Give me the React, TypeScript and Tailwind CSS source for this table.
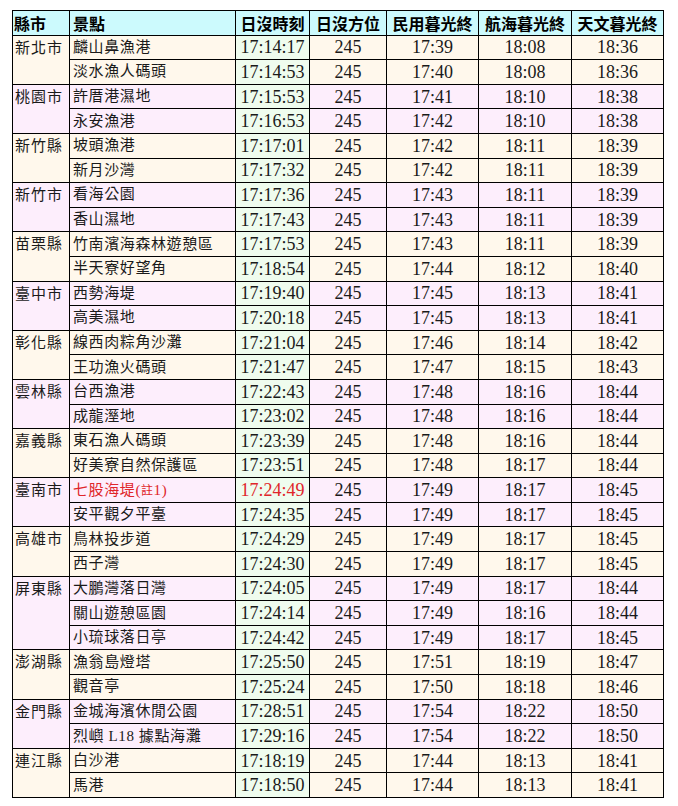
import React from "react";

type Row = { place: React.ReactNode; t: string; az: string; c: string; n: string; a: string; red?: boolean };
type Group = { county: string; rows: Row[] };

const groups: Group[] = [
  { county: "新北市", rows: [
    { place: "麟山鼻漁港", t: "17:14:17", az: "245", c: "17:39", n: "18:08", a: "18:36" },
    { place: "淡水漁人碼頭", t: "17:14:53", az: "245", c: "17:40", n: "18:08", a: "18:36" },
  ]},
  { county: "桃園市", rows: [
    { place: "許厝港濕地", t: "17:15:53", az: "245", c: "17:41", n: "18:10", a: "18:38" },
    { place: "永安漁港", t: "17:16:53", az: "245", c: "17:42", n: "18:10", a: "18:38" },
  ]},
  { county: "新竹縣", rows: [
    { place: "坡頭漁港", t: "17:17:01", az: "245", c: "17:42", n: "18:11", a: "18:39" },
    { place: "新月沙灣", t: "17:17:32", az: "245", c: "17:42", n: "18:11", a: "18:39" },
  ]},
  { county: "新竹市", rows: [
    { place: "看海公園", t: "17:17:36", az: "245", c: "17:43", n: "18:11", a: "18:39" },
    { place: "香山濕地", t: "17:17:43", az: "245", c: "17:43", n: "18:11", a: "18:39" },
  ]},
  { county: "苗栗縣", rows: [
    { place: "竹南濱海森林遊憩區", t: "17:17:53", az: "245", c: "17:43", n: "18:11", a: "18:39" },
    { place: "半天寮好望角", t: "17:18:54", az: "245", c: "17:44", n: "18:12", a: "18:40" },
  ]},
  { county: "臺中市", rows: [
    { place: "西勢海堤", t: "17:19:40", az: "245", c: "17:45", n: "18:13", a: "18:41" },
    { place: "高美濕地", t: "17:20:18", az: "245", c: "17:45", n: "18:13", a: "18:41" },
  ]},
  { county: "彰化縣", rows: [
    { place: "線西肉粽角沙灘", t: "17:21:04", az: "245", c: "17:46", n: "18:14", a: "18:42" },
    { place: "王功漁火碼頭", t: "17:21:47", az: "245", c: "17:47", n: "18:15", a: "18:43" },
  ]},
  { county: "雲林縣", rows: [
    { place: "台西漁港", t: "17:22:43", az: "245", c: "17:48", n: "18:16", a: "18:44" },
    { place: "成龍溼地", t: "17:23:02", az: "245", c: "17:48", n: "18:16", a: "18:44" },
  ]},
  { county: "嘉義縣", rows: [
    { place: "東石漁人碼頭", t: "17:23:39", az: "245", c: "17:48", n: "18:16", a: "18:44" },
    { place: "好美寮自然保護區", t: "17:23:51", az: "245", c: "17:48", n: "18:17", a: "18:44" },
  ]},
  { county: "臺南市", rows: [
    { place: <>七股海堤(<span className="text-[12px]">註</span>1)</>, t: "17:24:49", az: "245", c: "17:49", n: "18:17", a: "18:45", red: true },
    { place: "安平觀夕平臺", t: "17:24:35", az: "245", c: "17:49", n: "18:17", a: "18:45" },
  ]},
  { county: "高雄市", rows: [
    { place: "鳥林投步道", t: "17:24:29", az: "245", c: "17:49", n: "18:17", a: "18:45" },
    { place: "西子灣", t: "17:24:30", az: "245", c: "17:49", n: "18:17", a: "18:45" },
  ]},
  { county: "屏東縣", rows: [
    { place: "大鵬灣落日灣", t: "17:24:05", az: "245", c: "17:49", n: "18:17", a: "18:44" },
    { place: "關山遊憩區園", t: "17:24:14", az: "245", c: "17:49", n: "18:16", a: "18:44" },
    { place: "小琉球落日亭", t: "17:24:42", az: "245", c: "17:49", n: "18:17", a: "18:45" },
  ]},
  { county: "澎湖縣", rows: [
    { place: "漁翁島燈塔", t: "17:25:50", az: "245", c: "17:51", n: "18:19", a: "18:47" },
    { place: "觀音亭", t: "17:25:24", az: "245", c: "17:50", n: "18:18", a: "18:46" },
  ]},
  { county: "金門縣", rows: [
    { place: "金城海濱休閒公園", t: "17:28:51", az: "245", c: "17:54", n: "18:22", a: "18:50" },
    { place: "烈嶼 L18 據點海灘", t: "17:29:16", az: "245", c: "17:54", n: "18:22", a: "18:50" },
  ]},
  { county: "連江縣", rows: [
    { place: "白沙港", t: "17:18:19", az: "245", c: "17:44", n: "18:13", a: "18:41" },
    { place: "馬港", t: "17:18:50", az: "245", c: "17:44", n: "18:13", a: "18:41" },
  ]},
];

const serif = "font-['Liberation_Serif','Noto_Sans_CJK_TC',serif]";
const sans = "font-['Noto_Sans_CJK_TC','Liberation_Sans',sans-serif]";

export default function App() {
  return (
    <div className="bg-white w-[678px] h-[806px] pt-[10px] pl-[12px]">
      <table className="border-collapse table-fixed w-[652px] text-[#1a1a1a]">
        <colgroup>
          <col className="w-[57px]" />
          <col className="w-[166px]" />
          <col className="w-[74px]" />
          <col className="w-[77px]" />
          <col className="w-[92px]" />
          <col className="w-[93px]" />
          <col className="w-[92px]" />
        </colgroup>
        <thead>
          <tr className={`h-[24.6px] bg-[#ccfafd] ${sans} font-bold text-[16px] text-black leading-none`}>
            <th className="border border-black text-left pl-[1px] p-0">縣市</th>
            <th className="border border-black text-left pl-[3px] p-0">景點</th>
            <th className="border border-black text-center p-0">日沒時刻</th>
            <th className="border border-black text-center p-0">日沒方位</th>
            <th className="border border-black text-center p-0">民用暮光終</th>
            <th className="border border-black text-center p-0">航海暮光終</th>
            <th className="border border-black text-center p-0">天文暮光終</th>
          </tr>
        </thead>
        <tbody>
          {groups.map((g, gi) => {
            const bg = gi % 2 === 0 ? "bg-[#fff8ec]" : "bg-[#fdeefc]";
            return g.rows.map((r, ri) => (
              <tr key={`${gi}-${ri}`} className={`h-[24.6px] ${bg} leading-none`}>
                {ri === 0 && (
                  <td
                    rowSpan={g.rows.length}
                    className={`border border-black align-top p-0 pl-[2px] pt-[5px] text-[15px] tracking-[1px] ${serif}`}
                  >
                    {g.county}
                  </td>
                )}
                <td className={`border border-black p-0 pl-[3px] text-[15px] tracking-[0.6px] whitespace-nowrap ${serif} ${r.red ? "text-[#e0262a]" : ""}`}>
                  {r.place}
                </td>
                <td className={`border border-black p-0 text-center bg-[#effcee] text-[18px] ${serif} ${r.red ? "text-[#e0262a]" : ""}`}>
                  {r.t}
                </td>
                <td className={`border border-black p-0 text-center text-[18px] ${serif}`}>{r.az}</td>
                <td className={`border border-black p-0 text-center text-[18px] ${serif}`}>{r.c}</td>
                <td className={`border border-black p-0 text-center text-[18px] ${serif}`}>{r.n}</td>
                <td className={`border border-black p-0 text-center text-[18px] ${serif}`}>{r.a}</td>
              </tr>
            ));
          })}
        </tbody>
      </table>
    </div>
  );
}
